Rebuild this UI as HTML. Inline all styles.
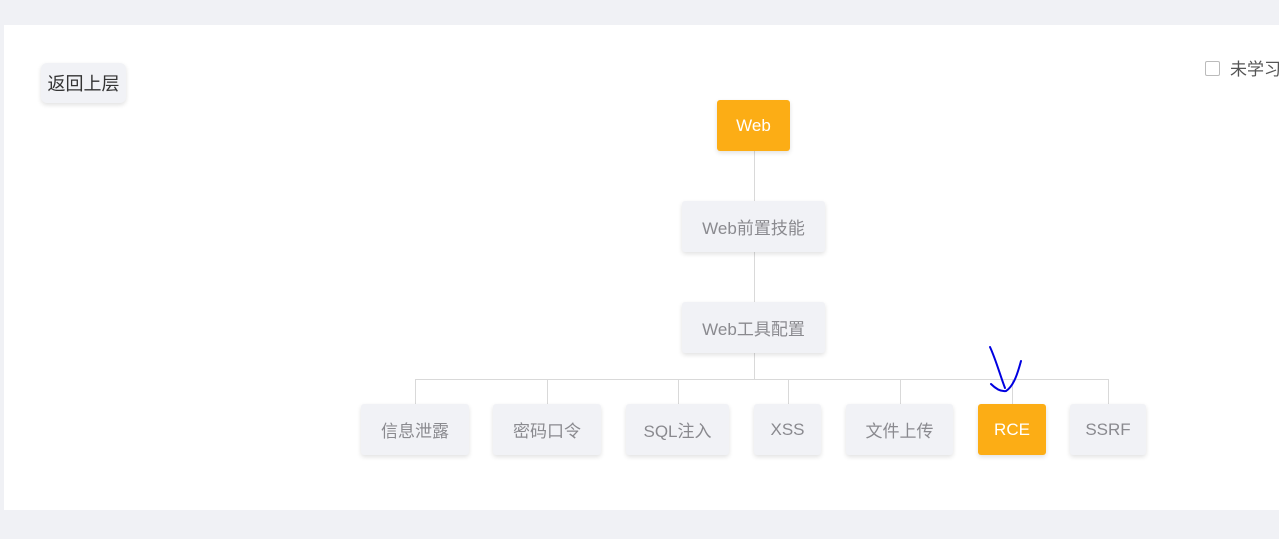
<!DOCTYPE html><html><head><meta charset="utf-8"><style>
body{margin:0;width:1279px;height:539px;background:#f0f1f5;position:relative;overflow:hidden;font-family:"Liberation Sans","Noto Sans CJK SC",sans-serif}
.panel{position:absolute;left:4px;top:25px;width:1280px;height:485px;background:#fff}
.n{position:absolute;box-sizing:border-box;display:flex;align-items:center;justify-content:center;background:#f1f2f6;color:#8a8a8f;font-size:17px;border-radius:3px;box-shadow:0 2px 5px rgba(0,0,0,.12)}
.o{background:#fcad15;color:#fff}
.l{position:absolute;background:#d9d9d9}
</style></head><body>
<div class="panel"></div>
<div class="n" style="left:41px;top:63px;width:85px;height:40px;color:#333;font-size:18px;border-radius:6px">返回上层</div>
<div style="position:absolute;left:1205px;top:61px;width:13px;height:13px;border:1px solid #bbb;border-radius:2px"></div>
<div style="position:absolute;left:1230px;top:55px;font-size:17px;color:#555;white-space:nowrap">未学习</div>
<div class="l" style="left:754px;top:151px;width:1px;height:228px"></div>
<div class="l" style="left:415px;top:379px;width:694px;height:1px"></div>
<div class="l" style="left:415px;top:379px;width:1px;height:25px"></div>
<div class="l" style="left:547px;top:379px;width:1px;height:25px"></div>
<div class="l" style="left:678px;top:379px;width:1px;height:25px"></div>
<div class="l" style="left:788px;top:379px;width:1px;height:25px"></div>
<div class="l" style="left:900px;top:379px;width:1px;height:25px"></div>
<div class="l" style="left:1012px;top:379px;width:1px;height:25px"></div>
<div class="l" style="left:1108px;top:379px;width:1px;height:25px"></div>
<div class="n o" style="left:717px;top:100px;width:73px;height:51px">Web</div>
<div class="n" style="left:682px;top:201px;width:143px;height:51px">Web前置技能</div>
<div class="n" style="left:682px;top:302px;width:143px;height:51px">Web工具配置</div>
<div class="n" style="left:361px;top:404px;width:108px;height:51px">信息泄露</div>
<div class="n" style="left:493px;top:404px;width:108px;height:51px">密码口令</div>
<div class="n" style="left:626px;top:404px;width:103px;height:51px">SQL注入</div>
<div class="n" style="left:754px;top:404px;width:67px;height:51px">XSS</div>
<div class="n" style="left:846px;top:404px;width:107px;height:51px">文件上传</div>
<div class="n o" style="left:978px;top:404px;width:68px;height:51px">RCE</div>
<div class="n" style="left:1070px;top:404px;width:76px;height:51px">SSRF</div>
<svg style="position:absolute;left:0;top:0" width="1279" height="539"><path d="M990 347 C996 360 1000 375 1005 388 M1021 361 C1018 372 1014 386 1006 391 C1000 392 995 388 991 384" fill="none" stroke="#0000e0" stroke-width="2" stroke-linecap="round"/></svg>
</body></html>
